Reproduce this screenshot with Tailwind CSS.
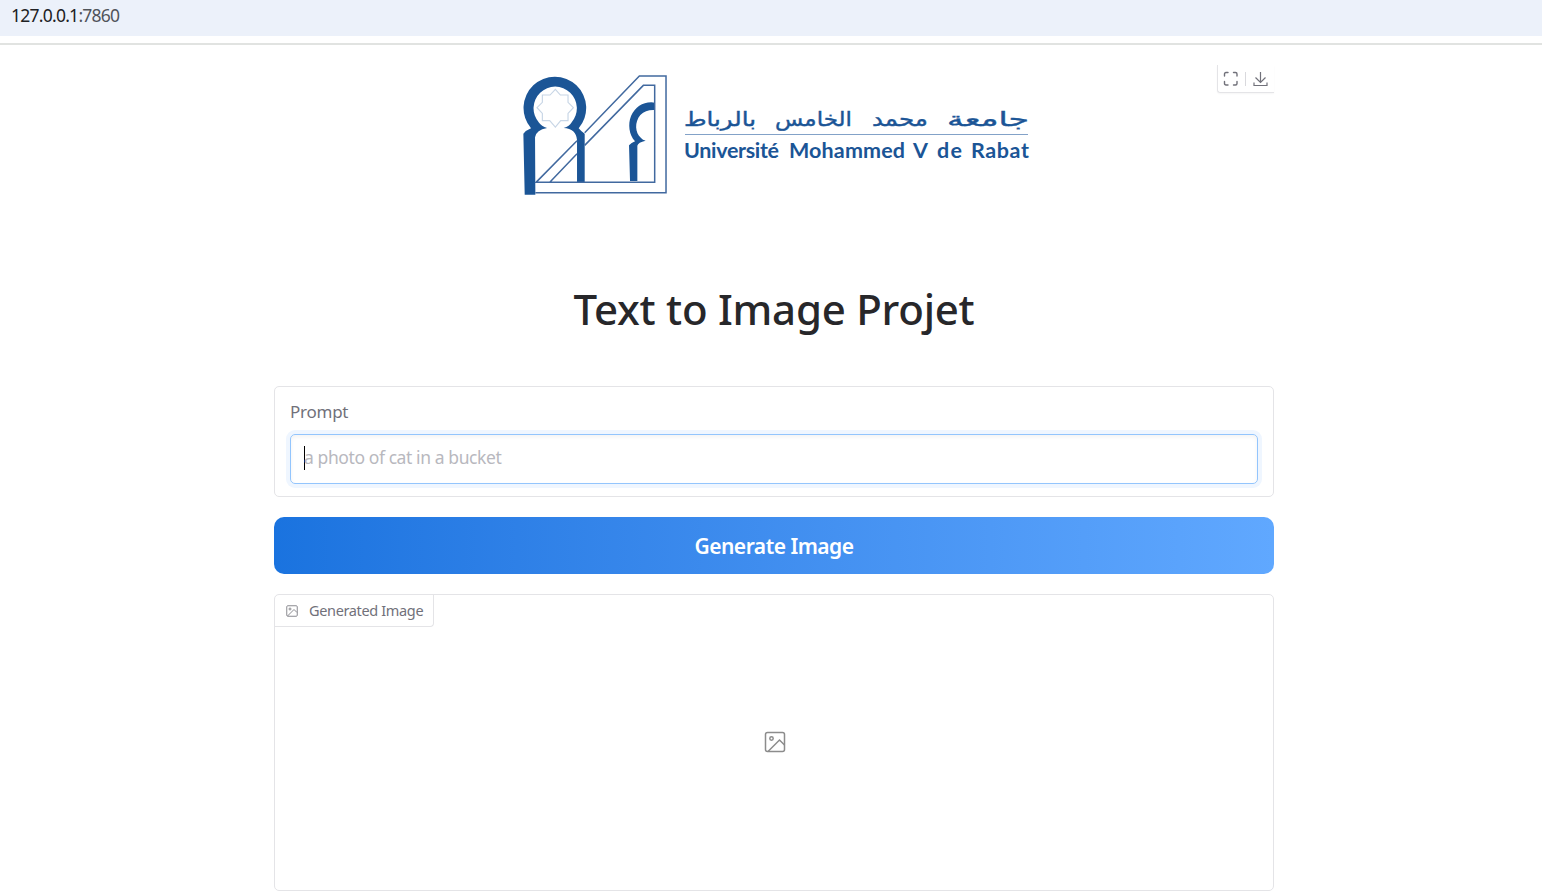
<!DOCTYPE html>
<html lang="en">
<head>
<meta charset="utf-8">
<title>Text to Image Projet</title>
<script src="https://cdn.jsdelivr.net/npm/@tailwindcss/browser@4"></script>
</head>
<body class="h-[891px] overflow-hidden bg-white font-['Noto_Sans',sans-serif] text-[#27272a]">
<header class="flex h-[45px] flex-col justify-between border-b-2 border-[#e1e3e1]">
  <div class="flex h-9 items-center bg-[#ecf1fa] pb-1.5 pl-[11px] text-[17.500px] tracking-[-0.75px] text-[#202124]"><span>127.0.0.1</span><span class="text-[#50545a]">:7860</span></div>
</header>
<main class="ml-[274px] flex h-[846px] w-[1000px] flex-col">
  <section class="flex h-[186px] items-start justify-between pt-5">
    <svg class="ml-[241px] h-[140px] w-[520px] shrink-0" viewBox="515 65 520 140" fill="#1b5596">
      <g transform="translate(514.700 64.700) scale(.3333)">
        <path d="M30 390L26 207Q34 197 49 191A94 94 0 1 1 192 191Q198 199 210 207V352H187V226Q184 192 147 190Q165 184 170 174A65 65 0 1 0 73 174Q80 184 97 190Q65 195 61 218L62 390Z"/>
        <path d="M421 114V136Q394 134 377 151C359 173 361 204 379 220Q384 226 393 228Q370 233 368 243V349H346L343 242Q350 235 361 230C343 211 339 178 349 154Q368 114 410 113Z"/>
        <path d="M122 74L137 91H160V113L176 129L160 146V168H138L122 187L105 168H83V146L67 129L83 113V91H106Z" fill="none" stroke="#c8d6e6" stroke-width="3.5"/>
        <path d="M62 384H454V34H374L210 204M187 228L64 353H420V62H386L210 242M187 267L106 352" fill="none" stroke="#41699f" stroke-width="4.5"/>
      </g>
      <g font-family="'DejaVu Sans',sans-serif" font-size="20" direction="rtl" lang="ar" stroke="#1b5596" stroke-width=".4">
        <text x="1029" y="126" textLength="82" lengthAdjust="spacingAndGlyphs">جامعة</text>
        <text x="928" y="126" textLength="56" lengthAdjust="spacingAndGlyphs">محمد</text>
        <text x="852" y="126" textLength="77" lengthAdjust="spacingAndGlyphs">الخامس</text>
        <text x="756" y="126" textLength="72" lengthAdjust="spacingAndGlyphs">بالرباط</text>
      </g>
      <path d="M685 134.5H1028" stroke="#83a2c8"/>
      <g font-family="Lato,sans-serif" font-size="21.5" font-weight="700">
        <text x="684" y="157.500" textLength="95">Université</text>
        <text x="789" y="157.500" textLength="116">Mohammed</text>
        <text x="913" y="157.500" textLength="16">V</text>
        <text x="937" y="157.500" textLength="25">de</text>
        <text x="971" y="157.500" textLength="58">Rabat</text>
      </g>
    </svg>
    <div class="flex h-7 w-[57px] items-center rounded-bl-[3px] border-b border-l border-[#e4e4e7] pl-[5px] text-[#71717a] shadow-[0_1px_2px_rgba(0,0,0,.04)]">
      <svg class="size-4" viewBox="0 0 16 16" fill="none" stroke="currentColor" stroke-width="1.4" stroke-linejoin="round" stroke-linecap="round"><path d="M1.5 5V3Q1.5 1.500 3 1.500H5M10.500 1.500H12.500Q14 1.500 14 3V5M14 10.500V12.500Q14 14 12.500 14H10.500M5 14H3Q1.500 14 1.500 12.500V10.500"/></svg>
      <span class="ml-1.5 h-3.5 w-px bg-[#d9d9dd]"></span>
      <svg class="ml-1.5 size-4" viewBox="0 0 16 16" fill="none" stroke="currentColor" stroke-width="1.2"><path d="M8.500 1V11.500M3.500 6.500L8.500 11.500L13.500 6.500M2 11.500V14.500H15V11.500"/></svg>
    </div>
  </section>
  <h1 class="mt-[47px] h-[62px] text-center text-[42px] leading-[62px] font-medium tracking-[-0.25px] whitespace-nowrap"><span>Text to Image Projet</span></h1>
  <section class="mt-[46px] h-[111px] shrink-0 rounded-[5px] border border-[#e4e4e7] px-[15px] pt-[13px]">
    <div class="h-6 text-[17px] leading-6 tracking-[-0.25px] text-[#71717a]">Prompt</div>
    <div class="mt-[10px] flex h-[50px] items-center rounded-[5px] border border-[#93c5fd] pb-[3px] pl-[13px] text-[17.500px] tracking-[-0.41px] text-[#b8b8be] shadow-[0_0_0_4px_#eff6ff,inset_0_2px_4px_rgba(0,0,0,.05)]"><span class="-mr-px h-6 w-px bg-black"></span><span>a photo of cat in a bucket</span></div>
  </section>
  <button class="mt-5 h-[57px] shrink-0 rounded-[10px] bg-linear-to-r from-[#1a73df] to-[#60a8ff] pt-[3px] text-[21px] tracking-[-0.5px] font-semibold text-white">Generate Image</button>
  <section class="mt-5 flex h-[297px] shrink-0 flex-col rounded-[5px] border border-[#e4e4e7]">
    <div class="flex h-8 w-[159px] items-center rounded-br-[4px] border-r border-b border-[#e4e4e7] pl-[11px] text-[14.5px] tracking-[-0.35px] text-[#71717a]">
      <svg class="mr-[11px] size-3 shrink-0" viewBox="0 0 24 24" fill="none" stroke="#8b8b91" stroke-width="2"><rect x="1.500" y="1.500" width="21" height="21" rx="2"/><circle cx="8" cy="8" r="2"/><path d="M22 15L16 9L3 22"/></svg>
      <span class="whitespace-nowrap">Generated Image</span>
    </div>
    <div class="flex h-[230px] items-center justify-center pl-px">
      <svg class="h-[22px] w-[22px]" viewBox="0 0 22 22" fill="none" stroke="#8c8c8c" stroke-width="1.500"><rect x="1.500" y="1.500" width="19" height="19" rx="2"/><circle cx="7.500" cy="7.500" r="1.700"/><path d="M20.500 14L15.500 9L4 20.500"/></svg>
    </div>
  </section>
</main>
</body>
</html>
